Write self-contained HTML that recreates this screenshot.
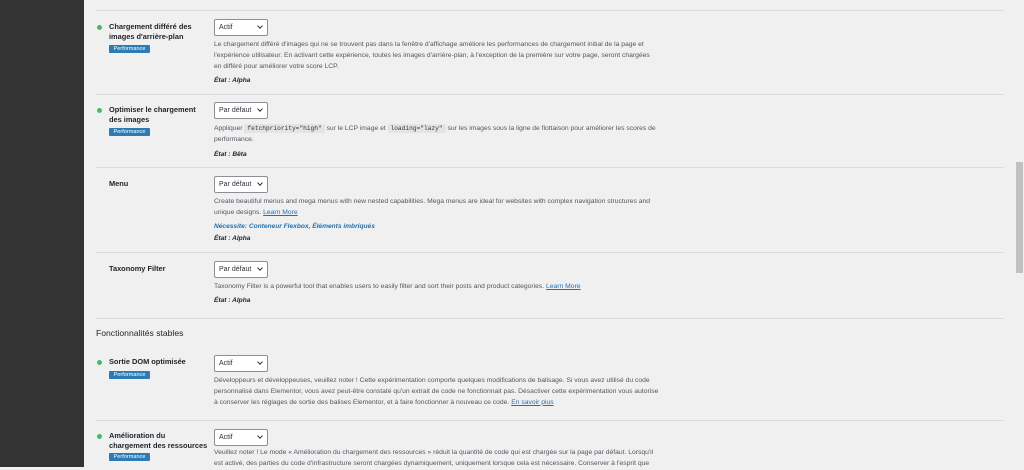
<!DOCTYPE html>
<html><head><meta charset="utf-8"><style>
body{margin:0;width:1024px;height:467px;overflow:hidden;background:#f0f0f1;font-family:"Liberation Sans",sans-serif;color:#3c434a;position:relative}
.side{position:absolute;left:0;top:0;width:84px;height:467px;background:#333}
.a{position:absolute}
.line{position:absolute;left:96px;width:908px;height:1px;background:#dcdcde}
.dot{position:absolute;left:97px;width:5px;height:5px;border-radius:50%;background:#4ab866}
.lab{position:absolute;left:109px;font-size:7.4px;font-weight:bold;color:#1d2327;line-height:10px;width:112px}
.badge{position:absolute;left:109px;width:41px;height:8px;background:#2c7bb4;color:#fff;font-size:5.6px;line-height:8px;text-align:center;border-radius:1px}
.sel{position:absolute;left:214px;width:50px;height:15px;border:1px solid #8c8f94;background:#fff;border-radius:2px;font-size:7px;line-height:15px;padding-left:4px;box-sizing:content-box;color:#2c3338}
.sel::after{content:"";position:absolute;right:5px;top:4px;width:3px;height:3px;border-right:1px solid #333;border-bottom:1px solid #333;transform:rotate(45deg)}
.d{position:absolute;left:214px;width:445px;font-size:6.75px;line-height:10.8px;color:#50575e}
.st{position:absolute;left:214px;font-size:6.6px;font-weight:bold;font-style:italic;color:#1d2327}
code{font-family:"Liberation Mono",monospace;background:#e4e4e6;padding:1px 3px;font-size:6.2px;color:#2c3338}
a{color:#2271b1}
</style></head><body>
<div class="side"></div>
<div class="scroll a" style="left:1016px;top:162px;width:7px;height:111px;background:#c3c0c4"></div>
<div class="line" style="top:10px"></div>
<div class="dot" style="top:25px"></div>
<div class="lab" style="top:22px;width:95px">Chargement différé des images d'arrière-plan</div>
<div class="badge" style="top:45px">Performance</div>
<div class="sel" style="top:19px;width:48px">Actif</div>
<div class="d" style="top:40px">Le chargement différé d'images qui ne se trouvent pas dans la fenêtre d'affichage améliore les performances de chargement initial de la page et l'expérience utilisateur. En activant cette expérience, toutes les images d'arrière-plan, à l'exception de la première sur votre page, seront chargées en différé pour améliorer votre score LCP.</div>
<div class="st" style="top:77px">État : Alpha</div>
<div class="line" style="top:94px"></div>
<div class="dot" style="top:108px"></div>
<div class="lab" style="top:105px;width:95px">Optimiser le chargement des images</div>
<div class="badge" style="top:128px">Performance</div>
<div class="sel" style="top:102px;width:48px">Par défaut</div>
<div class="d" style="top:124px">Appliquer <code>fetchpriority="high"</code> sur le LCP image et <code>loading="lazy"</code> sur les images sous la ligne de flottaison pour améliorer les scores de performance.</div>
<div class="st" style="top:151px">État : Bêta</div>
<div class="line" style="top:167px"></div>
<div class="lab" style="top:179px">Menu</div>
<div class="sel" style="top:176px;width:48px">Par défaut</div>
<div class="d" style="top:197px">Create beautiful menus and mega menus with new nested capabilities. Mega menus are ideal for websites with complex navigation structures and unique designs. <a href="#">Learn More</a></div>
<div class="st" style="top:223px;color:#2271b1">Nécessite: Conteneur Flexbox, Éléments imbriqués</div>
<div class="st" style="top:235px">État : Alpha</div>
<div class="line" style="top:252px"></div>
<div class="lab" style="top:264px">Taxonomy Filter</div>
<div class="sel" style="top:261px;width:48px">Par défaut</div>
<div class="d" style="top:282px">Taxonomy Filter is a powerful tool that enables users to easily filter and sort their posts and product categories. <a href="#">Learn More</a></div>
<div class="st" style="top:297px">État : Alpha</div>
<div class="line" style="top:318px"></div>
<div class="a" style="left:96px;top:328px;font-size:8.6px;color:#1d2327">Fonctionnalités stables</div>
<div class="dot" style="top:360px"></div>
<div class="lab" style="top:357px">Sortie DOM optimisée</div>
<div class="badge" style="top:371px">Performance</div>
<div class="sel" style="top:355px;width:48px">Actif</div>
<div class="d" style="top:376px">Développeurs et développeuses, veuillez noter ! Cette expérimentation comporte quelques modifications de balisage. Si vous avez utilisé du code personnalisé dans Elementor, vous avez peut-être constaté qu'un extrait de code ne fonctionnait pas. Désactiver cette expérimentation vous autorise à conserver les réglages de sortie des balises Elementor, et à faire fonctionner à nouveau ce code. <a href="#">En savoir plus</a></div>
<div class="line" style="top:420px"></div>
<div class="dot" style="top:434px"></div>
<div class="lab" style="top:431px">Amélioration du<br>chargement des ressources</div>
<div class="badge" style="top:453px">Performance</div>
<div class="sel" style="top:429px;width:48px">Actif</div>
<div class="d" style="top:448px">Veuillez noter ! Le mode « Amélioration du chargement des ressources » réduit la quantité de code qui est chargée sur la page par défaut. Lorsqu'il est activé, des parties du code d'infrastructure seront chargées dynamiquement, uniquement lorsque cela est nécessaire. Conserver à l'esprit que</div>
</body></html>
